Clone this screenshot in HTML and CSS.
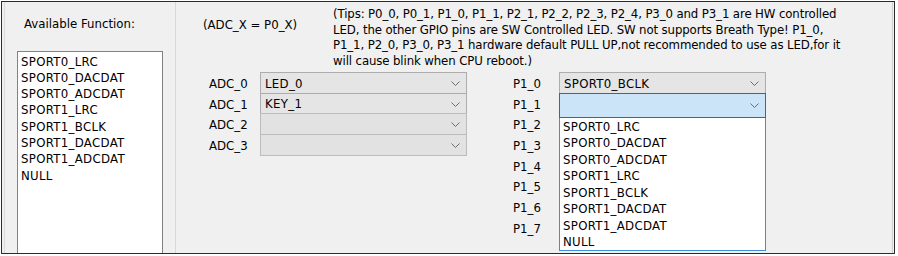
FILE: index.html
```html
<!DOCTYPE html>
<html lang="en">
<head>
    <meta charset="UTF-8">
    <title>Pin Function Config</title>
    <link rel="stylesheet" href="styles.css">
</head>
<body>
    <div class="frame">
        <div class="side">
            <div class="side-inner">
                <p class="side-title">Available Function:</p>
                <ul class="listbox">
                    <li>SPORT0_LRC</li>
                    <li>SPORT0_DACDAT</li>
                    <li>SPORT0_ADCDAT</li>
                    <li>SPORT1_LRC</li>
                    <li>SPORT1_BCLK</li>
                    <li>SPORT1_DACDAT</li>
                    <li>SPORT1_ADCDAT</li>
                    <li>NULL</li>
                </ul>
            </div>
        </div>

        <div class="main">
            <div class="head">
                <span class="formula">(ADC_X = P0_X)</span>
                <p class="tips">(Tips: P0_0, P0_1, P1_0, P1_1, P2_1, P2_2, P2_3, P2_4, P3_0 and P3_1 are HW controlled<br>LED, the other GPIO pins are SW Controlled LED. SW not supports Breath Type! P1_0,<br>P1_1, P2_0, P3_0, P3_1 hardware default PULL UP,not recommended to use as LED,for it<br>will cause blink when CPU reboot.)</p>
            </div>

            <div class="pins">
                <div class="pin-col">
                    <div class="pin-row">
                        <span class="pin-label">ADC_0</span>
                        <div class="combo"><span>LED_0</span><svg class="chev" width="9" height="5" viewBox="0 0 9 5"><polyline points="0.5,0.5 4.5,4.5 8.5,0.5"/></svg></div>
                    </div>
                    <div class="pin-row">
                        <span class="pin-label">ADC_1</span>
                        <div class="combo"><span>KEY_1</span><svg class="chev" width="9" height="5" viewBox="0 0 9 5"><polyline points="0.5,0.5 4.5,4.5 8.5,0.5"/></svg></div>
                    </div>
                    <div class="pin-row">
                        <span class="pin-label">ADC_2</span>
                        <div class="combo disabled"><span></span><svg class="chev" width="9" height="5" viewBox="0 0 9 5"><polyline points="0.5,0.5 4.5,4.5 8.5,0.5"/></svg></div>
                    </div>
                    <div class="pin-row">
                        <span class="pin-label">ADC_3</span>
                        <div class="combo disabled"><span></span><svg class="chev" width="9" height="5" viewBox="0 0 9 5"><polyline points="0.5,0.5 4.5,4.5 8.5,0.5"/></svg></div>
                    </div>
                </div>

                <div class="pin-col port-col">
                    <div class="pin-row">
                        <span class="pin-label narrow">P1_0</span>
                        <div class="combo"><span>SPORT0_BCLK</span><svg class="chev" width="9" height="5" viewBox="0 0 9 5"><polyline points="0.5,0.5 4.5,4.5 8.5,0.5"/></svg></div>
                    </div>
                    <div class="pin-row">
                        <span class="pin-label narrow">P1_1</span>
                        <div class="combo focused"><span></span><svg class="chev" width="9" height="5" viewBox="0 0 9 5"><polyline points="0.5,0.5 4.5,4.5 8.5,0.5"/></svg></div>
                    </div>
                    <div class="pin-row"><span class="pin-label narrow">P1_2</span></div>
                    <div class="pin-row"><span class="pin-label narrow">P1_3</span></div>
                    <div class="pin-row"><span class="pin-label narrow">P1_4</span></div>
                    <div class="pin-row"><span class="pin-label narrow">P1_5</span></div>
                    <div class="pin-row"><span class="pin-label narrow">P1_6</span></div>
                    <div class="pin-row"><span class="pin-label narrow">P1_7</span></div>

                    <ul class="popup">
                        <li>SPORT0_LRC</li>
                        <li>SPORT0_DACDAT</li>
                        <li>SPORT0_ADCDAT</li>
                        <li>SPORT1_LRC</li>
                        <li>SPORT1_BCLK</li>
                        <li>SPORT1_DACDAT</li>
                        <li>SPORT1_ADCDAT</li>
                        <li>NULL</li>
                    </ul>
                </div>
            </div>
        </div>
    </div>
</body>
</html>
```

FILE: styles.css
```css
* {
    margin: 0;
    padding: 0;
    box-sizing: border-box;
}

body {
    background-color: #ffffff;
    font-family: "DejaVu Sans", sans-serif;
    font-size: 11.75px;
    color: #000;
}

.frame {
    margin: 1px 0 0 1px;
    width: 894px;
    height: 253px;
    border: 1px solid #2b2b2b;
    background-color: #f0f0f0;
    display: flex;
    overflow: hidden;
}

/* left panel */
.side {
    width: 173px;
    padding-left: 2px;
    flex-shrink: 0;
}

.side-inner {
    height: 100%;
    border-left: 1px solid #dadada;
    padding: 14px 0 0 0;
}

.side-title {
    line-height: 16px;
    padding-left: 19px;
}

.listbox {
    list-style: none;
    margin: 19px 0 0 12px;
    width: 146px;
    height: 220px;
    background-color: #fff;
    border: 1px solid #828282;
    padding: 1.5px 0 0 3px;
}

.listbox li,
.popup li,
.combo span {
    letter-spacing: 0.3px;
    white-space: nowrap;
}

.listbox li {
    line-height: 16.3px;
}

/* right panel */
.main {
    width: 718px;
    border-left: 1px solid #d8d8d8;
    border-right: 1px solid #d0d0d0;
    flex-shrink: 0;
}

.head {
    display: flex;
    padding-top: 5.25px;
}

.formula {
    width: 157px;
    padding-left: 27px;
    margin-top: 11px;
    line-height: 15.5px;
    white-space: nowrap;
}

.tips {
    line-height: 15.5px;
    letter-spacing: -0.12px;
    white-space: nowrap;
}

.pins {
    display: flex;
    margin: 2.75px 0 0 33px;
    gap: 46px;
}

.pin-col {
    display: flex;
    flex-direction: column;
}

.port-col {
    position: relative;
}

.pin-row {
    display: flex;
    height: 20.7px;
}

.pin-label {
    width: 51px;
    line-height: 21px;
    padding-top: 2px;
}

.pin-label.narrow {
    width: 46px;
}

.combo {
    width: 207px;
    height: 22px;
    border: 1px solid #adadad;
    background-color: #e5e5e5;
    display: flex;
    align-items: center;
    justify-content: space-between;
    padding: 1px 6px 0 4px;
    position: relative;
}

.combo.disabled {
    background-color: #e2e2e2;
    border-color: #bcbcbc;
}

.combo.focused {
    background-color: #cce4f7;
    border-color: #0078d7;
    height: 25px;
    z-index: 1;
}

.chev {
    fill: none;
    stroke: #6d6d6d;
    stroke-width: 1;
}

.popup {
    position: absolute;
    left: 46px;
    top: 45px;
    width: 207px;
    height: 134px;
    list-style: none;
    background-color: #fff;
    border: 1px solid #3d8fd9;
    padding: 0.5px 0 0 3px;
}

.popup li {
    line-height: 16.55px;
}
```
